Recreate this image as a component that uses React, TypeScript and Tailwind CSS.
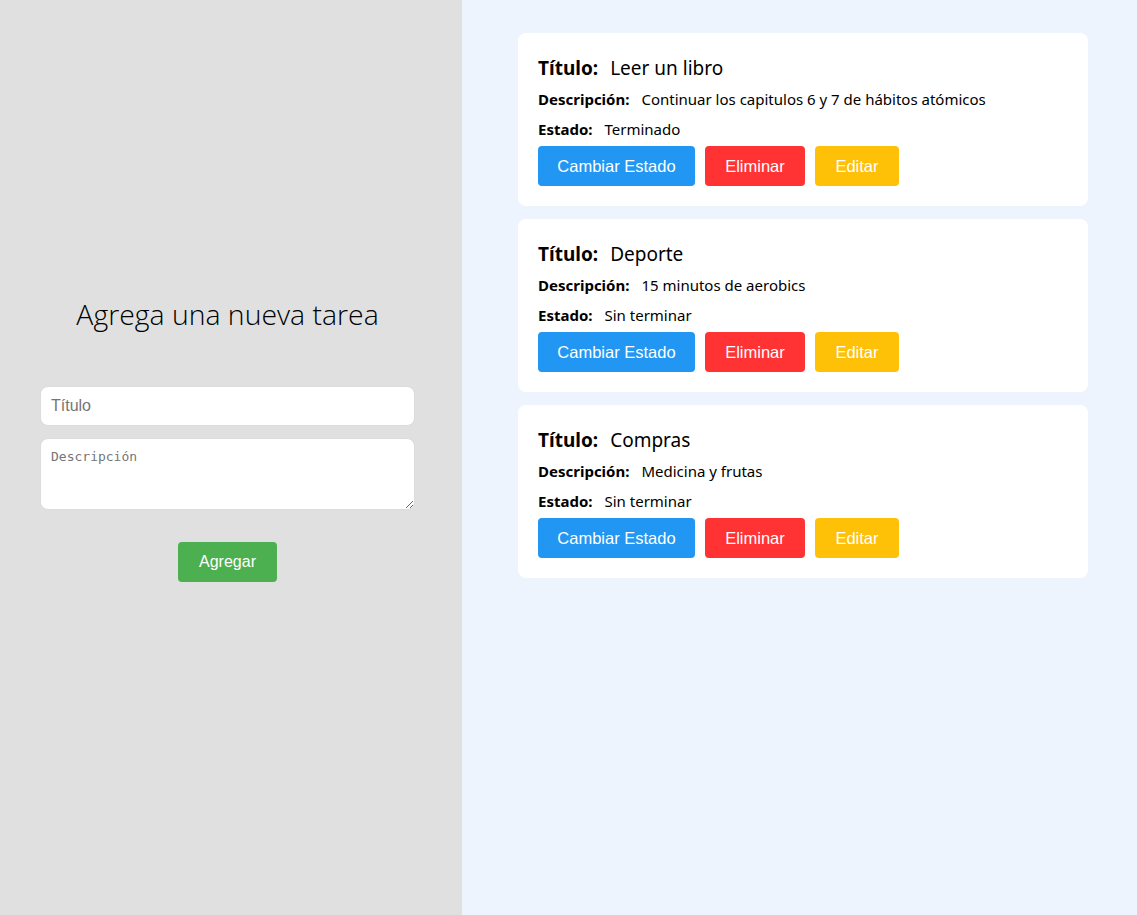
import React from "react";

const tasks = [
  { titulo: "Leer un libro", descripcion: "Continuar los capitulos 6 y 7 de hábitos atómicos", estado: "Terminado" },
  { titulo: "Deporte", descripcion: "15 minutos de aerobics", estado: "Sin terminar" },
  { titulo: "Compras", descripcion: "Medicina y frutas", estado: "Sin terminar" },
];

const seg = { fontFamily: '"Noto Sans", "Open Sans", sans-serif' };
const arial = { fontFamily: '"Liberation Sans", Arial, sans-serif' };

export default function App() {
  return (
    <div className="flex w-[1137px] h-[915px]">
      <div className="w-[462px] shrink-0 bg-[#e0e0e0] flex flex-col justify-center pb-[38px]">
        <div className="w-[455px] px-10 flex flex-col items-center">
          <h1 className="text-[28.4px] font-light text-black leading-[36px] mb-[54px]" style={{ fontFamily: '"Open Sans", "Noto Sans", sans-serif', fontWeight: 300 }}>
            Agrega una nueva tarea
          </h1>
          <input
            placeholder="Título"
            className="w-full h-10 rounded-lg border border-[#dcdcdc] bg-white px-[10px] text-[16px] text-[#333] placeholder:text-[#757575] outline-none"
            style={arial}
          />
          <textarea
            placeholder="Descripción"
            className="w-full h-[72px] mt-3 rounded-lg border border-[#dcdcdc] bg-white px-[10px] py-[8px] text-[13px] placeholder:text-[#757575] outline-none"
            style={{ fontFamily: '"DejaVu Sans Mono", monospace' }}
          />
          <button
            className="mt-[32px] h-10 w-[99px] rounded-[4px] bg-[#4caf50] text-white text-[16px]"
            style={arial}
          >
            Agregar
          </button>
        </div>
      </div>
      <div className="flex-1 bg-[#edf4fe] pl-[56px] pt-[33px]">
        <div className="w-[570px] flex flex-col gap-[13px]">
          {tasks.map((t) => (
            <div key={t.titulo} className="bg-white rounded-lg px-5 pt-5 pb-5" style={seg}>
              <div className="flex items-center text-[19px] leading-[30px] text-black">
                <span className="font-bold mr-3">Título:</span>
                <span>{t.titulo}</span>
              </div>
              <div className="flex items-center text-[15px] leading-[22px] mt-[5px] text-black">
                <span className="font-bold mr-3">Descripción:</span>
                <span>{t.descripcion}</span>
              </div>
              <div className="flex items-center text-[15px] leading-[22px] mt-[8px] text-black">
                <span className="font-bold mr-3">Estado:</span>
                <span>{t.estado}</span>
              </div>
              <div className="flex gap-[10px] mt-[6px] text-[16.5px]" style={arial}>
                <button className="h-10 w-[157px] pt-[1px] rounded-[4px] bg-[#2196f3] text-white">Cambiar Estado</button>
                <button className="h-10 w-[100px] pt-[1px] rounded-[4px] bg-[#f33] text-white">Eliminar</button>
                <button className="h-10 w-[84px] pt-[1px] rounded-[4px] bg-[#ffc107] text-white">Editar</button>
              </div>
            </div>
          ))}
        </div>
      </div>
    </div>
  );
}
